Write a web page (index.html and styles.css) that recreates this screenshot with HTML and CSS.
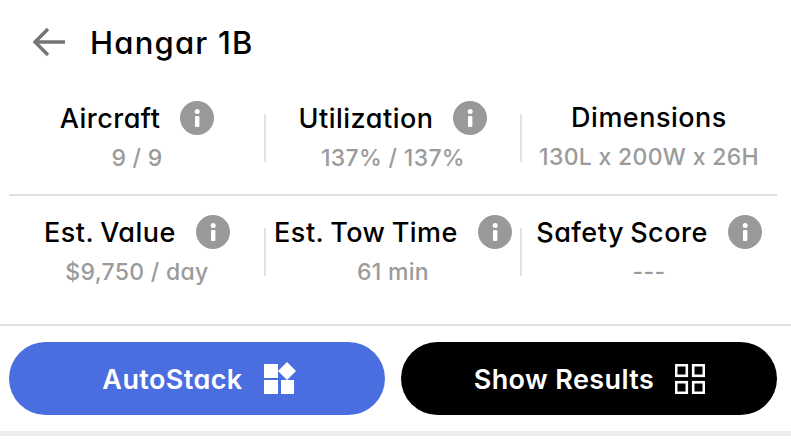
FILE: index.html
```html
<!DOCTYPE html>
<html lang="en">
<head>
<meta charset="utf-8">
<title>Hangar 1B</title>
<link rel="stylesheet" href="styles.css">
</head>
<body>
<main class="panel">
  <header class="header">
    <svg class="back" viewBox="0 0 34 32" aria-hidden="true"><path d="M33 16H3M16 3 3 16l13 13"/></svg>
    <h1 class="title">Hangar 1B</h1>
  </header>
  <section class="stats">
    <div class="row row-first">
      <div class="cell">
        <div class="label"><span>Aircraft</span><svg class="info" viewBox="0 0 34 34"><circle cx="17" cy="17" r="17"/><rect x="15" y="15" width="4.4" height="11" rx="1"/><circle cx="17.2" cy="10.6" r="2.5"/></svg></div>
        <div class="value">9 / 9</div>
      </div>
      <div class="cell">
        <div class="label"><span>Utilization</span><svg class="info" viewBox="0 0 34 34"><circle cx="17" cy="17" r="17"/><rect x="15" y="15" width="4.4" height="11" rx="1"/><circle cx="17.2" cy="10.6" r="2.5"/></svg></div>
        <div class="value">137% / 137%</div>
      </div>
      <div class="cell">
        <div class="label"><span>Dimensions</span></div>
        <div class="value">130L x 200W x 26H</div>
      </div>
    </div>
    <div class="row">
      <div class="cell">
        <div class="label"><span>Est. Value</span><svg class="info" viewBox="0 0 34 34"><circle cx="17" cy="17" r="17"/><rect x="15" y="15" width="4.4" height="11" rx="1"/><circle cx="17.2" cy="10.6" r="2.5"/></svg></div>
        <div class="value">$9,750 / day</div>
      </div>
      <div class="cell">
        <div class="label"><span>Est. Tow Time</span><svg class="info" viewBox="0 0 34 34"><circle cx="17" cy="17" r="17"/><rect x="15" y="15" width="4.4" height="11" rx="1"/><circle cx="17.2" cy="10.6" r="2.5"/></svg></div>
        <div class="value">61 min</div>
      </div>
      <div class="cell">
        <div class="label"><span>Safety Score</span><svg class="info" viewBox="0 0 34 34"><circle cx="17" cy="17" r="17"/><rect x="15" y="15" width="4.4" height="11" rx="1"/><circle cx="17.2" cy="10.6" r="2.5"/></svg></div>
        <div class="value">---</div>
      </div>
    </div>
  </section>
  <footer class="actions">
    <button class="btn btn-blue" type="button"><span class="btn-text">AutoStack</span>
      <svg class="btn-icon" viewBox="0 0 32 34"><rect x="0" y="2" width="14" height="14"/><rect x="0" y="18" width="14" height="14"/><rect x="17" y="18" width="13" height="14"/><path d="M23 0 32 9 23 18 14 9z"/></svg>
    </button>
    <button class="btn btn-black" type="button"><span class="btn-text">Show Results</span>
      <svg class="btn-icon btn-icon-outline" viewBox="0 0 30 30"><rect x="1.2" y="1.2" width="10.6" height="10.6"/><rect x="18.2" y="1.2" width="10.6" height="10.6"/><rect x="1.2" y="18.2" width="10.6" height="10.6"/><rect x="18.2" y="18.2" width="10.6" height="10.6"/></svg>
    </button>
  </footer>
  <div class="strip"></div>
</main>
</body>
</html>
```
FILE: styles.css
```css
html, body {
  margin: 0;
  padding: 0;
  background: #fff;
}
body {
  font-family: Inter, "Liberation Sans", sans-serif;
  font-feature-settings: "cv11" 1;
  overflow: hidden;
}
.panel {
  width: 791px;
  height: 445px;
  display: flex;
  flex-direction: column;
}
.header {
  height: 84px;
  padding-left: 32px;
  display: flex;
  align-items: center;
  box-sizing: border-box;
}
.back {
  width: 34px;
  height: 32px;
  margin-right: 24px;
  fill: none;
  stroke: #757575;
  stroke-width: 3.4;
}
.title {
  margin: 0;
  font-size: 31px;
  font-weight: 500;
  letter-spacing: 1.2px;
  color: #000;
}
.stats {
  margin: 0 14px 0 9px;
  height: 240px;
}
.row {
  display: grid;
  grid-template-columns: repeat(3, 256px);
  box-sizing: border-box;
  height: 128px;
  padding-top: 19px;
}
.row-first {
  height: 112px;
  border-bottom: 2px solid #e0e0e0;
  padding-top: 17px;
}
.cell {
  height: 60px;
  position: relative;
  display: flex;
  flex-direction: column;
  align-items: center;
}
.cell + .cell::before {
  content: "";
  position: absolute;
  left: -1px;
  top: 13px;
  width: 2px;
  height: 48px;
  background: #e2e2e2;
}
.label {
  display: flex;
  align-items: center;
  gap: 20px;
  height: 34px;
  font-size: 27px;
  font-weight: 500;
  letter-spacing: 0.5px;
  word-spacing: -1.5px;
  color: #000;
  white-space: nowrap;
}
.info {
  width: 34px;
  height: 34px;
  flex: none;
}
.info circle:first-child {
  fill: #999;
}
.info rect,
.info circle:last-child {
  fill: #fff;
}
.value {
  margin-top: 9px;
  font-size: 23px;
  font-weight: 500;
  letter-spacing: 0.3px;
  color: #9b9b9b;
  white-space: nowrap;
}
.actions {
  border-top: 2px solid #e0e0e0;
  height: 107px;
  box-sizing: border-box;
  padding: 16px 14px 0 9px;
  display: flex;
  gap: 16px;
  align-items: flex-start;
}
.btn {
  flex: 0 0 376px;
  box-sizing: border-box;
  height: 73px;
  border: 0;
  border-radius: 36.5px;
  font: inherit;
  font-size: 27px;
  font-weight: 600;
  letter-spacing: 0.4px;
  color: #fff;
  display: flex;
  align-items: center;
  justify-content: center;
  gap: 21px;
  padding: 0;
}
.btn-text {
  padding-top: 2px;
}
.btn-blue {
  background: #4a6ee0;
  padding-left: 4px;
}
.btn-black {
  background: #000;
  padding-left: 1px;
}
.btn-icon {
  width: 32px;
  height: 34px;
  fill: #fff;
  flex: none;
}
.btn-icon-outline {
  width: 30px;
  height: 30px;
  fill: none;
  stroke: #fff;
  stroke-width: 2.6;
}
.strip {
  height: 5px;
  background: #eee;
}
```
